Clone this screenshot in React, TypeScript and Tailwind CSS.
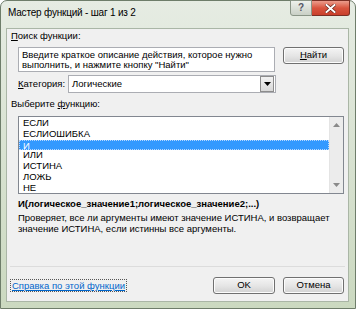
import React from 'react'

const items = ['ЕСЛИ', 'ЕСЛИОШИБКА', 'И', 'ИЛИ', 'ИСТИНА', 'ЛОЖЬ', 'НЕ']

function WinButton({ children, className = '' }: { children: React.ReactNode; className?: string }) {
  return (
    <div
      className={`flex h-[17px] items-center justify-center rounded-[3px] border border-[#707070] bg-gradient-to-b from-[#f4f4f4] via-[#e6e6e6] to-[#d2d2d2] text-[9.5px] text-black shadow-[inset_0_0_0_1px_#fcfcfc] ${className}`}
    >
      {children}
    </div>
  )
}

export default function App() {
  return (
    <div className="h-[309px] w-[356px] overflow-hidden bg-white font-['Liberation_Sans',Arial,sans-serif]">
      <div className="flex h-full w-full flex-col rounded-t-[7px] border border-[#6e7d6a] bg-gradient-to-b from-[#e6ece3] via-[#d8e2d1] to-[#cbd9c0]">
        {/* title bar */}
        <div className="flex h-[27px] shrink-0 items-start">
          <div className="pl-[7px] pt-[5px] text-[10px] leading-[14px] tracking-[-0.2px] text-black">
            Мастер функций - шаг 1 из 2
          </div>
          <div className="ml-auto mr-[5px] flex -mt-px">
            <div className="flex h-[16px] w-[22px] items-center justify-center rounded-bl-[3px] border border-[#8a9587] bg-gradient-to-b from-[#eef1ec] to-[#c9d0c6] text-[10px] font-bold leading-none text-[#556]">
              ?
            </div>
            <div className="flex h-[16px] w-[38px] items-center justify-center rounded-br-[3px] border border-l-0 border-[#7a2f24] bg-gradient-to-b from-[#eb9c8c] via-[#d9543e] to-[#c8402c]">
              <svg width="11" height="9" viewBox="0 0 11 9">
                <path d="M1.5 1 L9.5 8 M9.5 1 L1.5 8" stroke="#5a1a12" strokeWidth="3.2" strokeLinecap="square" />
                <path d="M1.5 1 L9.5 8 M9.5 1 L1.5 8" stroke="#ffffff" strokeWidth="2" strokeLinecap="square" />
              </svg>
            </div>
          </div>
        </div>

        {/* client area */}
        <div className="mb-[6px] ml-[5px] mr-[6px] flex flex-1 flex-col border border-[#aab6a6] bg-[#f0f0f0] text-[9.5px] text-black">
          <div className="pl-[4px] leading-[14px]">
            <span className="underline">П</span>оиск функции:
          </div>

          <div className="mt-[4px] flex pl-[11px] pr-[4px]">
            <div className="h-[25px] w-[257px] border border-[#abadb3] bg-white px-[3px] pt-[2px] leading-[10px]">
              Введите краткое описание действия, которое нужно выполнить, и нажмите кнопку "Найти"
            </div>
            <WinButton className="ml-[8px] w-[61px]">
              <span>
                <span className="underline">Н</span>айти
              </span>
            </WinButton>
          </div>

          <div className="mt-[3px] flex items-center pl-[11px]">
            <div className="w-[50px]">
              <span className="underline">К</span>атегория:
            </div>
            <div className="flex h-[18px] w-[208px] items-center border border-[#abadb3] bg-white pl-[3px]">
              <span>Логические</span>
              <div className="ml-auto mr-px flex h-[16px] w-[14px] items-center justify-center border border-[#8c8c8c] bg-gradient-to-b from-[#f2f2f2] to-[#d8d8d8]">
                <svg width="7" height="4" viewBox="0 0 7 4">
                  <path d="M0 0 H7 L3.5 4 Z" fill="#000" />
                </svg>
              </div>
            </div>
          </div>

          <div className="mt-[4px] pl-[4px] leading-[14px]">
            Выберите <span className="underline">ф</span>ункцию:
          </div>

          <div className="ml-[11px] mr-[4px] mt-[5px] flex h-[78px] border border-[#828790] bg-white">
            <div className="flex-1 pt-[1px]">
              {items.map((it) => (
                <div
                  key={it}
                  className={
                    it === 'И'
                      ? 'h-[10.8px] border border-dotted border-[#b8d8ff] bg-[#3399ff] pl-[3px] leading-[9px] text-white'
                      : 'h-[10.8px] pl-[4px] leading-[10.8px]'
                  }
                >
                  {it}
                </div>
              ))}
            </div>
            <div className="flex w-[14px] flex-col items-center justify-between border-l border-[#e4e4e4] bg-[#ececec] py-[6px]">
              <svg width="7" height="4" viewBox="0 0 7 4">
                <path d="M0 4 H7 L3.5 0 Z" fill="#8a8a8a" />
              </svg>
              <svg width="7" height="4" viewBox="0 0 7 4">
                <path d="M0 0 H7 L3.5 4 Z" fill="#8a8a8a" />
              </svg>
            </div>
          </div>

          <div className="mt-[4px] pl-[11px] font-bold leading-[12px]">
            И(логическое_значение1;логическое_значение2;...)
          </div>
          <div className="mt-[2px] pl-[11px] pr-[2px] leading-[11px]">
            Проверяет, все ли аргументы имеют значение ИСТИНА, и возвращает значение ИСТИНА, если истинны все
            аргументы.
          </div>

          <div className="mx-[3px] mt-auto border-t border-[#dcdcdc]" />
          <div className="mb-[7px] mt-[10px] flex items-center pr-[4px]">
            <div className="ml-[3px] border border-dotted border-[#555] px-[1px] leading-[11px] text-[#0066cc] underline">
              Справка по этой функции
            </div>
            <WinButton className="ml-auto w-[62px]">OK</WinButton>
            <WinButton className="ml-[8px] w-[61px]">Отмена</WinButton>
          </div>
        </div>
      </div>
    </div>
  )
}
